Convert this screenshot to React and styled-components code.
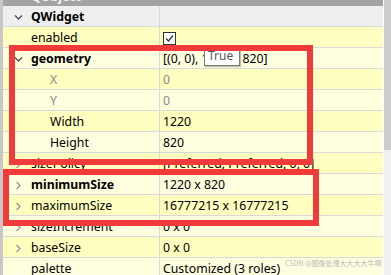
import React from 'react';
import styled, { createGlobalStyle } from 'styled-components';

const GlobalStyle = createGlobalStyle`
  html, body {
    margin: 0;
    padding: 0;
    background: #ffffff;
    overflow: hidden;
  }
  body {
    font-family: "Noto Sans", "Noto Sans CJK SC", sans-serif;
    font-size: 12.3px;
  }
`;

const Frame = styled.div`
  position: relative;
  display: flex;
  width: 391px;
  height: 275px;
  overflow: hidden;
  background: #ffffff;
`;

const Editor = styled.div`
  width: 380px;
  display: flex;
  flex-direction: column;
  border-left: 3px solid #c8c8c8;
  box-shadow: inset 2px 0 0 #f0f0f0;
`;

const Gap = styled.div`
  width: 1px;
  background: #ffffff;
`;

const Scrollbar = styled.div`
  width: 7px;
  display: flex;
  flex-direction: column;
  background: #f0f0f0;
`;

const Thumb = styled.div`
  height: 150px;
  background: #cdcdcd;
`;

const TopBar = styled.div`
  height: 6px;
  flex: none;
  overflow: hidden;
  background: #a3a3a3;
  padding-left: 28px;
`;

const TopText = styled.div`
  margin-top: -13px;
  line-height: 20px;
  font-weight: bold;
  color: #f4f4f4;
`;

const Row = styled.div`
  display: flex;
  flex: none;
  box-sizing: border-box;
  height: 21px;
  padding-top: 2px;
  border-bottom: 1px solid #d9d9d9;
  background: ${p => p.$bg};
  line-height: 18px;
  color: ${p => (p.$disabled ? '#8a8a8a' : '#000000')};
`;

const NameCell = styled.div`
  width: 157px;
  flex: none;
  display: flex;
  align-items: center;
  margin-top: -2px;
  padding-top: 2px;
  border-right: 1px solid #d9d9d9;
  padding-left: ${p => p.$indent}px;
  box-sizing: border-box;
  font-weight: ${p => (p.$bold ? 'bold' : 'normal')};
  white-space: nowrap;
`;

const Branch = styled.span`
  width: 19px;
  margin-left: -22px;
  margin-right: 3px;
  height: 18px;
  display: flex;
  align-items: center;
  justify-content: center;
`;

const ValueCell = styled.div`
  flex: 1;
  display: flex;
  align-items: center;
  padding-left: 3px;
  white-space: nowrap;
  overflow: hidden;
`;

const Check = styled.span`
  width: 11px;
  height: 11px;
  border: 1px solid #333333;
  background: #ffffff;
  display: flex;
  align-items: center;
  justify-content: center;
`;

const Marker = styled.div`
  position: absolute;
  left: ${p => p.$x}px;
  top: ${p => p.$y}px;
  width: ${p => p.$w}px;
  height: ${p => p.$h}px;
  border: 6px solid #f13b3b;
  box-sizing: border-box;
  pointer-events: none;
`;

const Tip = styled.div`
  position: absolute;
  left: 204px;
  top: 48px;
  width: 36px;
  height: 18px;
  box-sizing: border-box;
  background: #ffffff;
  border: 1px solid #7a7a7a;
  box-shadow: 1px 1px 1px rgba(0, 0, 0, 0.25);
  color: #575757;
  font-size: 12px;
  line-height: 14px;
  padding-left: 3px;
  overflow: hidden;
`;

const Watermark = styled.div`
  position: absolute;
  left: 285px;
  top: 259px;
  font-size: 7px;
  line-height: 8px;
  color: #b9b9b9;
  font-family: "Noto Sans CJK SC", sans-serif;
  white-space: nowrap;
`;

const Chevron = ({ open, dark }) => (
  <svg width="9" height="9" viewBox="0 0 9 9">
    <path
      d={open ? 'M1 2.5 L4.5 6 L8 2.5' : 'M2.5 1 L6 4.5 L2.5 8'}
      fill="none"
      stroke={dark ? '#505050' : '#9a9a9a'}
      strokeWidth="1.4"
    />
  </svg>
);

const YELLOW = '#ffffbf';
const LIGHT = '#ffffdf';

const rows = [
  { name: 'enabled', check: true },
  { name: 'geometry', value: '[(0, 0), 1220 x 820]', bold: true, branch: 'open' },
  { name: 'X', value: '0', level: 1, disabled: true },
  { name: 'Y', value: '0', level: 1, disabled: true },
  { name: 'Width', value: '1220', level: 1 },
  { name: 'Height', value: '820', level: 1 },
  { name: 'sizePolicy', value: '[Preferred, Preferred, 0, 0]', branch: 'closed' },
  { name: 'minimumSize', value: '1220 x 820', bold: true, branch: 'closed' },
  { name: 'maximumSize', value: '16777215 x 16777215', branch: 'closed' },
  { name: 'sizeIncrement', value: '0 x 0', branch: 'closed' },
  { name: 'baseSize', value: '0 x 0', branch: 'closed' },
  { name: 'palette', value: 'Customized (3 roles)' },
];

const App = () => (
  <Frame>
    <GlobalStyle />
    <Editor>
      <TopBar>
        <TopText>QObject</TopText>
      </TopBar>
      <Row $bg="#efefef">
        <NameCell $indent={28} $bold>
          <Branch><Chevron open dark /></Branch>
          QWidget
        </NameCell>
        <ValueCell />
      </Row>
      {rows.map((r, i) => (
        <Row key={r.name} $bg={i % 2 === 0 ? YELLOW : LIGHT} $disabled={r.disabled}>
          <NameCell $indent={28 + (r.level || 0) * 19} $bold={r.bold}>
            {r.branch && (
              <Branch><Chevron open={r.branch === 'open'} dark={r.branch === 'open'} /></Branch>
            )}
            {r.name}
          </NameCell>
          <ValueCell>
            {r.check ? (
              <Check>
                <svg width="9" height="9" viewBox="0 0 9 9">
                  <path d="M1 4.5 L3.5 7 L8 1.5" fill="none" stroke="#333" strokeWidth="1.2" />
                </svg>
              </Check>
            ) : r.value}
          </ValueCell>
        </Row>
      ))}
    </Editor>
    <Gap />
    <Scrollbar>
      <Thumb />
    </Scrollbar>
    <Tip>True</Tip>
    <Marker $x={9} $y={45} $w={304} $h={120} />
    <Marker $x={3} $y={169} $w={316} $h={57} />
    <Watermark>CSDN @图像处理大大大大牛啊</Watermark>
  </Frame>
);

export default App;
